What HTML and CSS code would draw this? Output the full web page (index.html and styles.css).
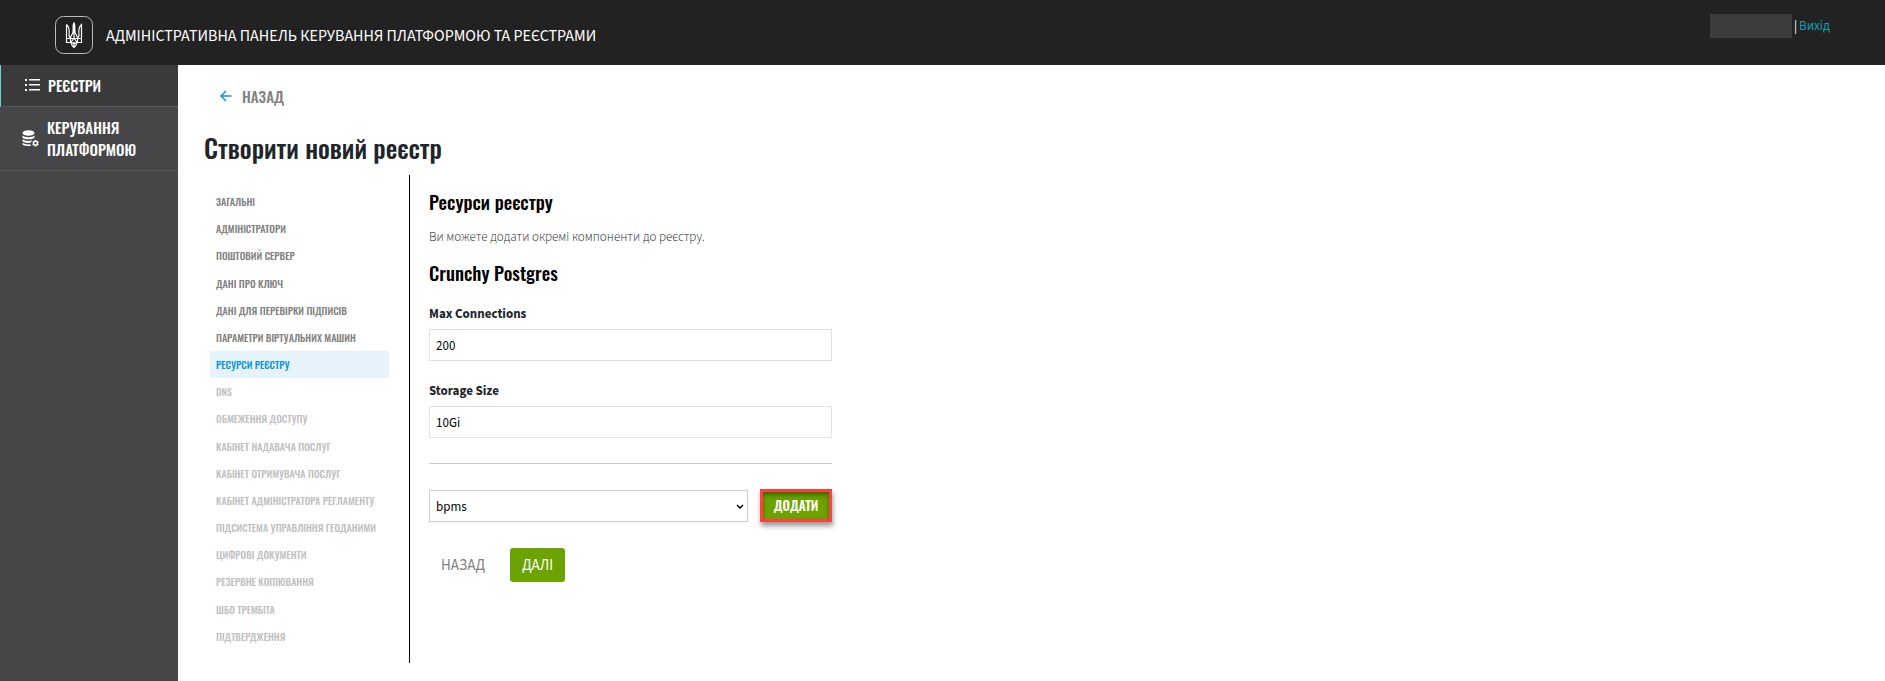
FILE: index.html
```html
<!DOCTYPE html>
<html lang="uk">
<head>
  <meta charset="UTF-8">
  <meta name="viewport" content="width=device-width, initial-scale=1.0">
  <title>Створити новий реєстр</title>
  <link rel="stylesheet" href="styles.css">
</head>
<body>
  <header class="header">
    <svg class="logo" viewBox="0 0 38 38" fill="none" stroke="#fff" aria-hidden="true">
      <rect x="0.5" y="0.5" width="37" height="37" rx="8" stroke="#bbb"/>
      <path d="M19 6.500V22M19 6.500c-1.500 2.500-.5 6-1 9.500-.4 3-2.500 3.500-2.500 6M19 6.500c1.500 2.500.5 6 1 9.500.4 3 2.500 3.500 2.500 6M11.500 8.500v18h4.500c.5 2.500 1.500 4 3 5 1.500-1 2.500-2.500 3-5h4.500v-18c-3.500 3-3 7-2.500 10.500.3 2-1.500 2.500-1.500 3.500M11.500 8.500c3.500 3 3 7 2.500 10.500-.3 2 1.500 2.500 1.500 3.500M11.500 22.500h15M16 26.500c1-2 2-2.500 3-4.500 1 2 2 2.500 3 4.500-1.500 0-2.500.5-3 2-.5-1.500-1.500-2-3-2M15.500 22.500v4M22.500 22.500v4M19 26v5" stroke-width="1.200"/>
    </svg>
    <span class="header-title">АДМІНІСТРАТИВНА ПАНЕЛЬ КЕРУВАННЯ ПЛАТФОРМОЮ ТА РЕЄСТРАМИ</span>
    <div class="user">
      <span class="user-name"></span>
      <span class="user-divider">|</span>
      <a href="/logout">Вихід</a>
    </div>
  </header>

  <div class="page">
    <nav class="sidebar">
      <a class="sidebar-link active" href="/admin/registry/overview">
        <svg width="15" height="14" viewBox="0 0 15 14" fill="#fff" aria-hidden="true">
          <path d="M0 1h2v2H0zM4 1h11v1.500H4zM0 6h2v2H0zM4 6h11v1.500H4zM0 11h2v2H0zM4 11h11v1.500H4z"/>
        </svg>
        РЕЄСТРИ
      </a>
      <a class="sidebar-link" href="/admin/cluster/management">
        <svg width="17" height="17" viewBox="0 0 17 17" fill="#fff" aria-hidden="true">
          <ellipse cx="6.500" cy="3" rx="6" ry="2.800"/>
          <path d="M.5 5.500c2 2.200 10 2.200 12 0v1.700c0 2.400-12 3-12 0zM.5 9.300c2 1.900 7 2.100 9.500 1L9 12.500c-3 .9-8.500.3-8.500-1.700zM.5 12.800c2 1.500 5 1.800 7.800 1.500l.7 1.500c-3.500.6-8.500 0-8.500-1.700z"/>
          <circle cx="13.500" cy="13.200" r="2" fill="none" stroke="#fff" stroke-width="1.500"/>
          <path d="M13.500 10v1M13.500 15.400v1M10.700 11.600l.9.500M15.400 14.300l.9.500M10.700 14.800l.9-.5M15.400 12.100l.9-.5" fill="none" stroke="#fff" stroke-width="1.500"/>
        </svg>
        КЕРУВАННЯ ПЛАТФОРМОЮ
      </a>
    </nav>

    <main class="main">
      <a class="back-link" href="/admin/registry/overview">
        <svg width="12" height="12" viewBox="0 0 12 12" fill="none" stroke="#0b93dc" stroke-width="1.500" aria-hidden="true">
          <path d="M11.500 6H1M6 1L1 6l5 5"/>
        </svg>
        НАЗАД
      </a>
      <h1>Створити новий реєстр</h1>

      <div class="wizard">
        <ul class="steps">
          <li><a href="#general">ЗАГАЛЬНІ</a></li>
          <li><a href="#admins">АДМІНІСТРАТОРИ</a></li>
          <li><a href="#mail">ПОШТОВИЙ СЕРВЕР</a></li>
          <li><a href="#key">ДАНІ ПРО КЛЮЧ</a></li>
          <li><a href="#key-verification">ДАНІ ДЛЯ ПЕРЕВІРКИ ПІДПИСІВ</a></li>
          <li><a href="#vm">ПАРАМЕТРИ ВІРТУАЛЬНИХ МАШИН</a></li>
          <li class="current"><a href="#resources">РЕСУРСИ РЕЄСТРУ</a></li>
          <li class="disabled">DNS</li>
          <li class="disabled">ОБМЕЖЕННЯ ДОСТУПУ</li>
          <li class="disabled">КАБІНЕТ НАДАВАЧА ПОСЛУГ</li>
          <li class="disabled">КАБІНЕТ ОТРИМУВАЧА ПОСЛУГ</li>
          <li class="disabled">КАБІНЕТ АДМІНІСТРАТОРА РЕГЛАМЕНТУ</li>
          <li class="disabled">ПІДСИСТЕМА УПРАВЛІННЯ ГЕОДАНИМИ</li>
          <li class="disabled">ЦИФРОВІ ДОКУМЕНТИ</li>
          <li class="disabled">РЕЗЕРВНЕ КОПІЮВАННЯ</li>
          <li class="disabled">ШБО ТРЕМБІТА</li>
          <li class="disabled">ПІДТВЕРДЖЕННЯ</li>
        </ul>

        <form class="wizard-form">
          <h2>Ресурси реєстру</h2>
          <p>Ви можете додати окремі компоненти до реєстру.</p>
          <h2>Crunchy Postgres</h2>

          <div class="form-group">
            <label for="max-connections">Max Connections</label>
            <input type="text" id="max-connections" value="200">
          </div>
          <div class="form-group">
            <label for="storage-size">Storage Size</label>
            <input type="text" id="storage-size" value="10Gi">
          </div>

          <div class="add-resource">
            <div class="select-wrap">
              <select aria-label="Компонент">
                <option>bpms</option>
              </select>
              <svg class="chevron" width="8" height="6" viewBox="0 0 8 6" fill="none" stroke="#000" stroke-width="1.500" aria-hidden="true">
                <path d="M1 1l3 3 3-3"/>
              </svg>
            </div>
            <button type="button" class="add-btn">ДОДАТИ</button>
          </div>

          <div class="form-actions">
            <button type="button" class="prev-btn">НАЗАД</button>
            <button type="submit" class="next-btn">ДАЛІ</button>
          </div>
        </form>
      </div>
    </main>
  </div>
</body>
</html>
```

FILE: styles.css
```css
* {
  box-sizing: border-box;
}

body {
  margin: 0;
  min-height: 100vh;
  display: flex;
  flex-direction: column;
  font-family: "Source Sans Pro", "Source Sans 3", "Noto Sans", sans-serif;
  font-size: 13px;
  color: #212529;
  background: #fff;
}

a {
  text-decoration: none;
}

/* Header */
.header {
  display: flex;
  align-items: center;
  height: 65px;
  padding: 4px 55px 0;
  background: #222;
  color: #fff;
}

.logo {
  width: 38px;
  height: 38px;
  margin-right: 13px;
}

.header-title {
  padding-top: 2px;
  font-size: 16px;
}

.user {
  display: flex;
  align-items: center;
  gap: 2px;
  align-self: flex-start;
  margin: 10px 0 0 auto;
  line-height: 24px;
}

.user-name {
  width: 82px;
  height: 24px;
  background: #3c3c3b;
}

.user a {
  color: #1d9ab4;
}

/* Sidebar */
.page {
  flex: 1;
  display: flex;
}

.sidebar {
  flex: 0 0 178px;
  background: #464648;
}

.sidebar-link {
  display: flex;
  align-items: center;
  gap: 8px;
  padding: 9px 24px 10px 21px;
  border-bottom: 1px solid #58585a;
  border-left: 1px solid transparent;
  font-family: Oswald, "Liberation Sans Narrow", sans-serif;
  font-size: 15px;
  font-weight: 500;
  line-height: 22px;
  color: #fff;
}

.sidebar-link svg {
  flex-shrink: 0;
}

.sidebar-link.active {
  padding-left: 24px;
  background: #3a3a3a;
  border-left-color: #6fd3dc;
}

/* Content */
.main {
  flex: 1;
  padding: 20px 26px 18px;
}

.back-link {
  display: inline-flex;
  align-items: center;
  gap: 10px;
  margin-left: 16px;
  font-family: Oswald, "Liberation Sans Narrow", sans-serif;
  font-size: 15px;
  font-weight: 500;
  line-height: 22px;
  color: #808080;
}

h1 {
  margin: 22px 0 8px;
  font-family: Oswald, "Liberation Sans Narrow", sans-serif;
  font-size: 26px;
  font-weight: 500;
  line-height: 38px;
}

.wizard {
  display: flex;
}

.steps {
  display: flex;
  flex-direction: column;
  flex: 0 0 206px;
  margin: 0;
  padding: 13px 20px 13px 6px;
  border-right: 1px solid #000;
  list-style: none;
  font-family: Oswald, "Liberation Sans Narrow", sans-serif;
  font-size: 10px;
  font-weight: 500;
  line-height: 27px;
}

.steps li {
  flex: 1;
  padding-left: 6px;
  white-space: nowrap;
}

.steps a {
  color: #808080;
}

.steps .current {
  background: #e6f3fa;
}

.steps .current a {
  color: #0b93dc;
}

.steps .disabled {
  color: #bfbfbf;
}

/* Form */
.wizard-form {
  flex: 0 1 422px;
  padding: 11px 0 81px 19px;
}

h2 {
  margin: 0;
  font-family: Oswald, "Liberation Sans Narrow", sans-serif;
  font-size: 19px;
  font-weight: 500;
  line-height: 30px;
  color: #000;
}

.wizard-form p {
  margin: 10px 0 9px;
  font-weight: 300;
  line-height: 22px;
}

.form-group {
  margin: 18px 0 21px;
}

.form-group label {
  display: block;
  margin-bottom: 6px;
  font-weight: 700;
  line-height: 18px;
}

.form-group input,
.add-resource select {
  width: 100%;
  height: 32px;
  padding: 2px 6px 0;
  border: 1px solid #e0e0e8;
  border-radius: 0;
  background: #fff;
  font-family: inherit;
  font-size: 13px;
  color: #000;
}

.add-resource {
  display: flex;
  align-items: flex-end;
  gap: 12px;
  margin-top: 25px;
  padding-top: 25px;
  border-top: 1px solid #ccccd8;
}

.select-wrap {
  position: relative;
  flex: 1;
}

.add-resource select {
  display: block;
  appearance: none;
  border-color: #ccccd8;
}

.chevron {
  position: absolute;
  right: 4px;
  top: 14px;
  pointer-events: none;
}

.add-btn {
  width: 72px;
  height: 33px;
  padding: 0 0 2px;
  border: 3px solid #ff4040;
  background: #6ca300;
  box-shadow: inset 0 3px 5px rgba(0, 0, 0, 0.4), 1px 4px 5px rgba(0, 0, 0, 0.4);
  font-family: Oswald, "Liberation Sans Narrow", sans-serif;
  font-size: 13px;
  font-weight: 600;
  color: #fff;
}

.form-actions {
  display: flex;
  gap: 13px;
  margin-top: 26px;
}

.prev-btn,
.next-btn {
  height: 34px;
  padding: 0 12px;
  border: 0;
  border-radius: 3px;
  background: none;
  font-family: inherit;
  font-size: 15px;
  color: #808080;
}

.next-btn {
  background: #6ca300;
  color: #fff;
}
```
